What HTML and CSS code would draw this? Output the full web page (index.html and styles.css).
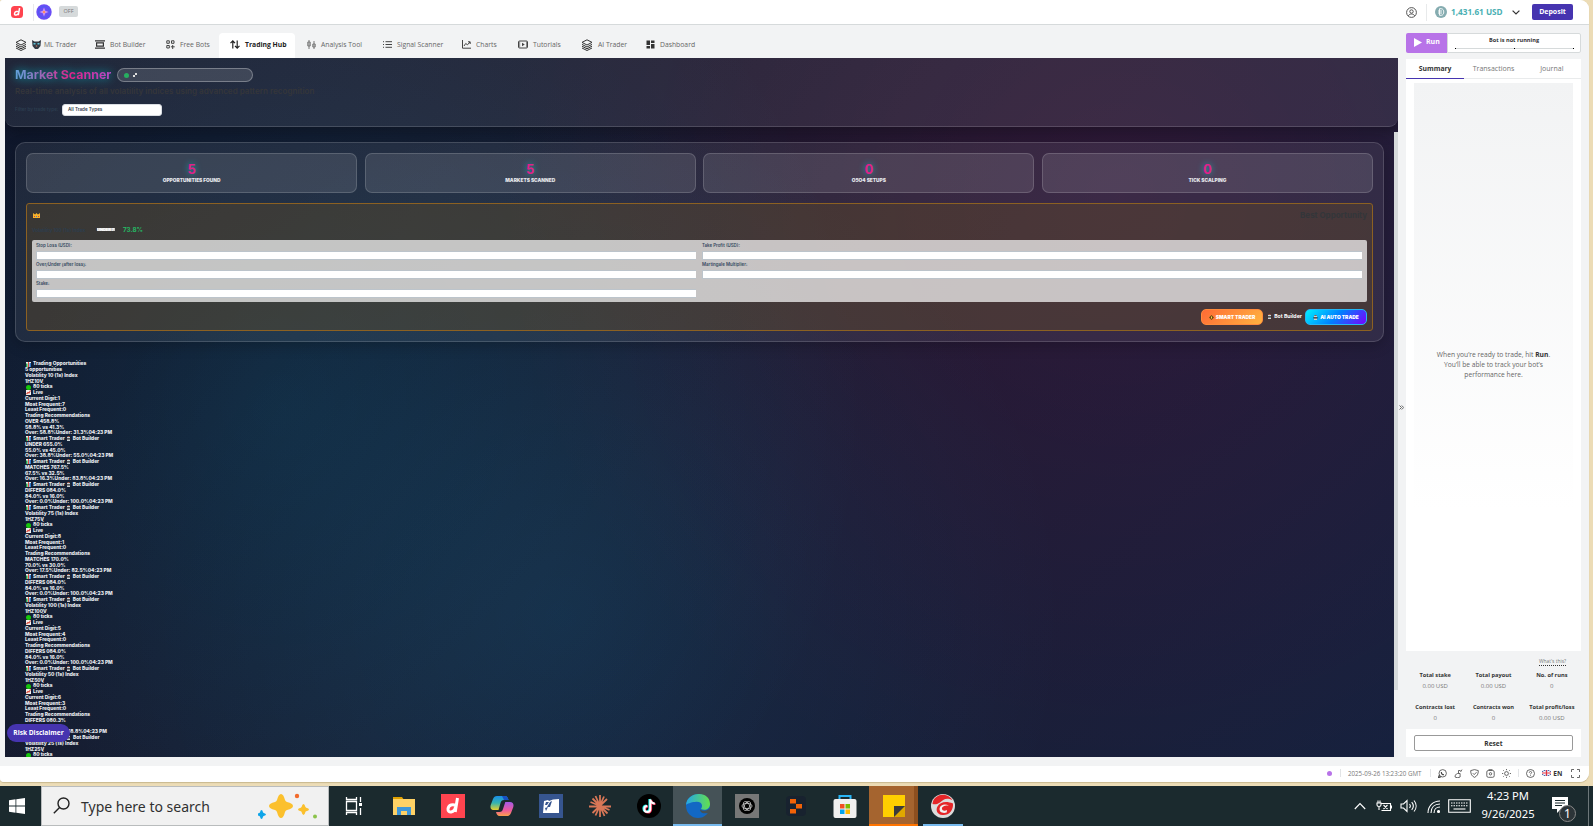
FILE: index.html
```html
<!DOCTYPE html>
<html lang="en">
<head>
<meta charset="utf-8">
<title>Trading Hub</title>
<link rel="stylesheet" href="styles.css">
</head>
<body>
<svg class="defs" width="0" height="0">
  <symbol id="bars" viewBox="0 0 10 10"><path fill="#e9eef0" d="M0 0h10v10H0z"/><path fill="#22a34c" d="M0 3h3v7H0z"/><path fill="#d84a3c" d="M4 0h2v10H4z"/><path fill="#2f78c8" d="M7 2h3v8H7z"/></symbol>
  <symbol id="line" viewBox="0 0 10 10"><path fill="#f1f1ee" d="M0 0h10v10H0z"/><path fill="none" stroke="#d9493b" stroke-width="2.2" d="M1 8l3-3 2 1 3-5"/></symbol>
  <symbol id="dot" viewBox="0 0 10 10"><circle cx="5" cy="5" r="5" fill="#16c60c"/></symbol>
  <symbol id="bot" viewBox="0 0 10 10"><path fill="#c9d3d8" d="M2 2h6v8H2z"/><path fill="#3b2a2a" d="M1 4h8v3H1z"/><path fill="#a8553e" d="M3 0h4v2H3z"/><path fill="#7fd6e6" d="M3 5h1.500v1H3zM5.500 5H7v1H5.500z"/></symbol>
  <symbol id="layers" viewBox="0 0 12 12"><path fill="none" stroke="#333" d="M6 .8l5 2.600-5 2.600-5-2.600zM1 5.400L6 8l5-2.600M1 7.200l5 2.600 5-2.600M1 9l5 2.500L11 9"/></symbol>
  <symbol id="spark" viewBox="0 0 24 24"><path d="M12 0q2.500 0 4 6 .5 1.500 2 2 6 1.500 6 4t-6 4q-1.500.5-2 2-1.500 6-4 6t-4-6q-.5-1.500-2-2-6-1.500-6-4t6-4q1.500-.5 2-2 1.500-6 4-6z"/></symbol>
</svg>

<div class="window">
  <header class="top">
    <svg class="logo" viewBox="0 0 12 12"><rect width="12" height="12" rx="3.500" fill="#ff444f"/><path fill="none" stroke="#fff" stroke-width="1.500" d="M8.600 2L7.300 9.200M7.600 7.300c-.6 2-4.300 2.500-4.100.4.200-2.300 3-2.700 4.500-1.900"/></svg>
    <i class="vline"></i>
    <svg class="round" viewBox="0 0 16 16"><circle cx="8" cy="8" r="7.700" fill="#6a4df5"/><circle cx="8" cy="8" r="5.500" fill="none" stroke="#3f63f0" stroke-width=".7"/><path fill="#c79af5" d="M8 3.500L9.300 6.700 12.500 8 9.300 9.300 8 12.500 6.700 9.300 3.500 8l3.200-1.300z"/><circle cx="8" cy="8" r="1.300" fill="#ff8a65"/></svg>
    <span class="off">OFF</span>
    <span class="grow"></span>
    <svg class="user" viewBox="0 0 11 11" fill="none" stroke="#444" stroke-width=".9"><circle cx="5.500" cy="5.500" r="4.900"/><circle cx="5.500" cy="4.500" r="1.700"/><path d="M2.400 8.800c1-2.400 5.200-2.400 6.200 0"/></svg>
    <i class="vline"></i>
    <svg class="coin" viewBox="0 0 12 12"><circle cx="6" cy="6" r="6" fill="#85acb0"/><path fill="none" stroke="#fff" stroke-width=".9" d="M4.500 2.700h1.700c3.400 0 3.400 6.600 0 6.600H4.500zM3 5h4M3 7h4"/></svg>
    <b class="bal">1,431.61 USD</b>
    <svg class="chev" viewBox="0 0 8 5"><path fill="none" stroke="#333" stroke-width="1.200" d="M.6.6L4 4 7.400.6"/></svg>
    <button class="deposit">Deposit</button>
  </header>

  <div class="body">
    <main>
      <nav class="tabs">
        <a class="t1"><svg class="i12"><use href="#layers"/></svg><svg class="cat" viewBox="0 0 9 9"><path fill="#333a44" d="M0 0l2.500 1.500h4L9 0 8.500 6 6 9H3L.5 6z"/><path fill="#5fc4d8" d="M1.500 3h2v1.500h-2zM5.500 3h2v1.500h-2z"/><path fill="#e08a6a" d="M3.800 5.500h1.400v1H3.800z"/></svg><span>ML Trader</span></a>
        <a class="t2"><svg class="i10" viewBox="0 0 10 9"><path fill="none" stroke="#333" stroke-width="1.200" d="M0 .8h10M0 8.200h10M1.600 2.800h6.800v3.400H1.600z"/></svg><span>Bot Builder</span></a>
        <a class="t3"><svg class="i9" viewBox="0 0 9 9"><path fill="none" stroke="#444" d="M.8.8h2.500v2.500H.8zM5.500.8H8v2.500H5.500zM.8 5.500h2.500V8H.8zM6.700 5v4M4.900 6.800h3.800"/></svg><span>Free Bots</span></a>
        <a class="t4 on"><svg class="i10" viewBox="0 0 10 9"><path fill="none" stroke="#222" stroke-width="1.200" d="M2.800 8.500V1M.5 3.200L2.800.9 5 3.200M7.200.5V8M5 5.800l2.200 2.300 2.300-2.300"/></svg><span>Trading Hub</span></a>
        <a class="t5"><svg class="i9" viewBox="0 0 9 9"><path fill="none" stroke="#777" d="M2 0v9M7 1v8M.8 2h2.400v4H.8zM5.800 4h2.400v3H5.800z"/></svg><span>Analysis Tool</span></a>
        <a class="t6"><svg class="i9" viewBox="0 0 9 8"><path stroke="#444" d="M0 1.200h1M0 4h1M0 6.800h1M2.500 1.200H9M2.500 4H9M2.500 6.800H9"/></svg><span>Signal Scanner</span></a>
        <a class="t7"><svg class="i9" viewBox="0 0 9 9"><path fill="none" stroke="#444" d="M.5 0v8.200H9M2 6l1.700-2.500 1.800 1.300L8 2M6 1.800h2.200V4"/></svg><span>Charts</span></a>
        <a class="t8"><svg class="i10" viewBox="0 0 10 8"><rect x=".5" y=".5" width="9" height="7" rx="1" fill="none" stroke="#444"/><path fill="#444" d="M4 2.200L6.800 4 4 5.800zM1.500 1v6h.6V1zM8 1v6h.6V1z"/></svg><span>Tutorials</span></a>
        <a class="t9"><svg class="i12"><use href="#layers"/></svg><span>AI Trader</span></a>
        <a class="t10"><svg class="i9" viewBox="0 0 9 9"><path fill="#333" d="M.5.5H4V5H.5zM5 .5h3.500v2.600H5zM.5 6H4v2.500H.5zM5 4h3.500v4.500H5z"/></svg><span>Dashboard</span></a>
      </nav>

      <div class="hub">
        <section class="head">
          <div class="hrow"><h1><span>Market Scanner</span></h1><div class="pill"><i class="green"></i><svg class="plug" viewBox="0 0 4 4"><path fill="#ddd" d="M0 2h2V0h2v2H2v2H0z"/></svg></div></div>
          <p class="sub">Real-time analysis of all volatility indices using advanced pattern recognition</p>
          <div class="filter"><label>Filter by trade type:</label><div class="select">All Trade Types</div></div>
        </section>

        <div class="scroll">
          <section class="card">
            <div class="stats">
              <div><b>5</b><small>OPPORTUNITIES FOUND</small></div>
              <div><b>5</b><small>MARKETS SCANNED</small></div>
              <div><b>0</b><small>O5O4 SETUPS</small></div>
              <div><b>0</b><small>TICK SCALPING</small></div>
            </div>
            <div class="best">
              <div class="bh"><svg class="crown" viewBox="0 0 7 5"><path fill="#f7b32b" d="M0 0l2 1.500L3.500 0 5 1.500 7 0v5H0z"/><path fill="#d0452f" d="M1 3h1v1H1zM5 3h1v1H5z"/><path fill="#2f8bd0" d="M3 3h1v1H3z"/></svg><h2>Best Opportunity</h2></div>
              <div class="bi"><span class="mk">Volatility 100 (1s) Index</span><span class="un">UNDER 7</span><span class="pc">73.8%</span></div>
              <div class="form">
                <label>Stop Loss (USD):<i></i></label><label>Take Profit (USD):<i></i></label>
                <label>Over/Under (after loss):<i></i></label><label>Martingale Multiplier:<i></i></label>
                <label>Stake:<i></i></label>
              </div>
              <div class="acts"><span class="smart"><svg class="i5" viewBox="0 0 10 10"><path fill="#6b4a12" d="M5 0l5 5-5 5-5-5z"/><path fill="#ffd34d" d="M4 3h2v4H4z"/></svg>SMART TRADER</span><span class="bb"><svg class="i5"><use href="#bot"/></svg>Bot Builder</span><span class="ai"><svg class="i5"><use href="#bot"/></svg>AI AUTO TRADE</span></div>
            </div>
          </section>

          <section class="list">
            <p><svg><use href="#bars"/></svg>Trading Opportunities</p><p>5 opportunities</p>
            <p>Volatility 10 (1s) Index</p><p>1HZ10V</p><p><svg><use href="#dot"/></svg>80 ticks</p><p><svg><use href="#line"/></svg>Live</p><p>Current Digit:1</p><p>Most Frequent:7</p><p>Least Frequent:0</p><p>Trading Recommendations</p>
            <p>OVER 458.8%</p><p>58.8% vs 41.3%</p><p>Over: 58.8%Under: 31.3%04:23 PM</p><p><svg><use href="#bars"/></svg>Smart Trader<svg class="b"><use href="#bot"/></svg>Bot Builder</p>
            <p>UNDER 655.0%</p><p>55.0% vs 45.0%</p><p>Over: 38.8%Under: 55.0%04:23 PM</p><p><svg><use href="#bars"/></svg>Smart Trader<svg class="b"><use href="#bot"/></svg>Bot Builder</p>
            <p>MATCHES 767.5%</p><p>67.5% vs 32.5%</p><p>Over: 16.3%Under: 83.8%04:23 PM</p><p><svg><use href="#bars"/></svg>Smart Trader<svg class="b"><use href="#bot"/></svg>Bot Builder</p>
            <p>DIFFERS 084.0%</p><p>84.0% vs 16.0%</p><p>Over: 0.0%Under: 100.0%04:23 PM</p><p><svg><use href="#bars"/></svg>Smart Trader<svg class="b"><use href="#bot"/></svg>Bot Builder</p>
            <p>Volatility 75 (1s) Index</p><p>1HZ75V</p><p><svg><use href="#dot"/></svg>80 ticks</p><p><svg><use href="#line"/></svg>Live</p><p>Current Digit:8</p><p>Most Frequent:1</p><p>Least Frequent:0</p><p>Trading Recommendations</p>
            <p>MATCHES 170.0%</p><p>70.0% vs 30.0%</p><p>Over: 17.5%Under: 82.5%04:23 PM</p><p><svg><use href="#bars"/></svg>Smart Trader<svg class="b"><use href="#bot"/></svg>Bot Builder</p>
            <p>DIFFERS 084.0%</p><p>84.0% vs 16.0%</p><p>Over: 0.0%Under: 100.0%04:23 PM</p><p><svg><use href="#bars"/></svg>Smart Trader<svg class="b"><use href="#bot"/></svg>Bot Builder</p>
            <p>Volatility 100 (1s) Index</p><p>1HZ100V</p><p><svg><use href="#dot"/></svg>80 ticks</p><p><svg><use href="#line"/></svg>Live</p><p>Current Digit:5</p><p>Most Frequent:4</p><p>Least Frequent:0</p><p>Trading Recommendations</p>
            <p>DIFFERS 084.0%</p><p>84.0% vs 16.0%</p><p>Over: 0.0%Under: 100.0%04:23 PM</p><p><svg><use href="#bars"/></svg>Smart Trader<svg class="b"><use href="#bot"/></svg>Bot Builder</p>
            <p>Volatility 50 (1s) Index</p><p>1HZ50V</p><p><svg><use href="#dot"/></svg>80 ticks</p><p><svg><use href="#line"/></svg>Live</p><p>Current Digit:6</p><p>Most Frequent:3</p><p>Least Frequent:0</p><p>Trading Recommendations</p>
            <p>DIFFERS 080.3%</p><p></p><p class="tail">18.8%04:23 PM</p><p class="tail2"><svg class="b"><use href="#bot"/></svg>Bot Builder</p>
            <p>Volatility 25 (1s) Index</p><p>1HZ25V</p><p><svg><use href="#dot"/></svg>80 ticks</p>
          </section>
          <div class="bar"><i></i></div>
        </div>
        <div class="risk">Risk Disclaimer</div>
      </div>
    </main>

    <div class="handle"><svg viewBox="0 0 5 5"><path fill="none" stroke="#444" stroke-width=".8" d="M.5.500l2 2-2 2M2.700.500l2 2-2 2"/></svg></div>

    <aside>
      <div class="runrow">
        <div class="run"><svg viewBox="0 0 8 9"><path fill="#fff" d="M0 0l8 4.500L0 9z"/></svg>Run</div>
        <div class="state"><b>Bot is not running</b><div class="track"><i></i><i></i><i></i></div></div>
      </div>
      <div class="panel">
        <div class="ptabs"><span class="on">Summary</span><span>Transactions</span><span>Journal</span></div>
        <div class="empty"><div><p>When you’re ready to trade, hit <b>Run</b>.<br>You’ll be able to track your bot’s<br>performance here.</p></div></div>
        <div class="totals">
          <div class="what"><span>What's this?</span></div>
          <div class="tg"><div><b>Total stake</b><span>0.00 USD</span></div><div><b>Total payout</b><span>0.00 USD</span></div><div><b>No. of runs</b><span>0</span></div>
          <div><b>Contracts lost</b><span>0</span></div><div><b>Contracts won</b><span>0</span></div><div><b>Total profit/loss</b><span>0.00 USD</span></div></div>
        </div>
        <div class="reset"><button>Reset</button></div>
      </div>
    </aside>
  </div>

  <footer>
    <i class="pd"></i><i class="vl"></i><span class="time">2025-09-26 13:23:20 GMT</span><i class="vl"></i>
    <svg viewBox="0 0 9 9"><circle cx="4.700" cy="4.300" r="3.700"/><path d="M1.400 6L.5 8.600l2.700-.8M3.300 3c0 1.500 1.200 2.800 2.700 2.800" stroke-width="1.100"/></svg>
    <svg viewBox="0 0 9 9"><path d="M3.500 4.500h2.600V8c-1 .8-4.600.8-5 0-.3-1.500.7-3 2.400-3.500zM4.500 4V1.500h2M6.500 3L8 .6"/></svg>
    <svg viewBox="0 0 9 9"><path d="M4.500.6l3.800 1c0 3.500-1 5.400-3.800 6.800C1.700 7 .7 5.100.7 1.600zM2.800 4.200l1.400 1.400 2.300-2.400"/></svg>
    <svg viewBox="0 0 9 9"><rect x=".8" y="1.500" width="7.400" height="6.800" rx="1.500"/><path d="M2.500.7h4"/><circle cx="4.500" cy="4.800" r="1.200"/></svg>
    <svg viewBox="0 0 9 9"><circle cx="4.500" cy="4.500" r="1.900"/><path d="M4.500 0v1.200M4.500 7.800V9M0 4.500h1.200M7.800 4.500H9M1.300 1.300l.8.8M6.900 6.900l.8.800M1.300 7.700l.8-.8M6.900 2.100l.8-.8"/></svg>
    <i class="vl"></i>
    <svg viewBox="0 0 9 9"><circle cx="4.500" cy="4.500" r="4"/><path d="M3.300 3.700c0-1.800 2.500-1.500 2.300-.1-.1.800-1.100.8-1.100 1.800M4.500 6.300v.8"/></svg>
    <svg class="flag" viewBox="0 0 9 6"><path fill="#3a56a5" stroke="none" d="M0 0h9v6H0z"/><path stroke="#fff" stroke-width="1.200" d="M0 0l9 6M9 0L0 6"/><path stroke="#fff" stroke-width="2.200" d="M4.500 0v6M0 3h9"/><path stroke="#e03040" stroke-width="1.100" d="M4.500 0v6M0 3h9"/></svg><b>EN</b>
    <svg class="fs" viewBox="0 0 9 9"><path d="M.5 3V.5H3M6 .5h2.500V3M8.500 6v2.500H6M3 8.500H.5V6"/></svg>
  </footer>
</div>

<div class="taskbar">
  <div class="start"><svg viewBox="0 0 16 16"><path fill="#fff" d="M0 2.200L6.500 1.300v6.200H0zM7.300 1.200L16 0v7.500H7.300zM0 8.400h6.500v6.300L0 13.800zM7.300 8.400H16V16l-8.700-1.200z"/></svg></div>
  <div class="search"><svg class="mag" viewBox="0 0 17 17"><circle cx="10.500" cy="6.500" r="5.500" fill="none" stroke="#222" stroke-width="1.400"/><path stroke="#222" stroke-width="1.400" d="M6.600 10.400L.8 16.300"/></svg><span>Type here to search</span>
    <svg class="stars" viewBox="0 0 60 26"><use href="#spark" x="11" y="1" width="24" height="24" fill="#fbc02d"/><use href="#spark" x="40" y="11" width="11" height="11" fill="#fbc02d"/><use href="#spark" x="-1" y="17" width="9" height="9" fill="#0ea5e9"/><circle cx="39" cy="3" r="2.200" fill="#f26b2c"/><circle cx="57" cy="23.500" r="2" fill="#8bc34a"/></svg></div>
  <div class="apps">
    <div><svg viewBox="0 0 24 24"><path fill="none" stroke="#fff" stroke-width="1.300" d="M3.500 7.500h10v9h-10zM3.500 3v2.500h10V3M3.500 21v-2.500h10V21M17.500 3v5M17.500 14v7"/><path fill="#fff" d="M16 9h3v3h-3z"/></svg></div>
    <div><svg viewBox="0 0 24 24"><path fill="#e0a100" d="M1 3h9l2 3H1z"/><path fill="#fed165" d="M1 5h22v16H1z"/><path fill="#3f97d8" d="M5 13h14v8h-4v-4H9v4H5z"/></svg></div>
    <div><svg viewBox="0 0 24 24"><path fill="#ff444f" d="M0 0h24v24H0z"/><path fill="none" stroke="#fff" stroke-width="3" d="M16.500 4L14.200 18M14.500 13c-1 6-8 6.500-7.500 2 .4-4.500 5-5 8-3.500"/></svg></div>
    <div><svg viewBox="0 0 24 24"><defs><linearGradient id="ca" x2="0" y2="1"><stop offset="0" stop-color="#1a8fe8"/><stop offset=".5" stop-color="#35b4b0"/><stop offset="1" stop-color="#e8d02c"/></linearGradient><linearGradient id="cb" x2="0" y2="1"><stop offset="0" stop-color="#a35ae8"/><stop offset=".6" stop-color="#ee5a9a"/><stop offset="1" stop-color="#f9a04a"/></linearGradient></defs><path fill="url(#ca)" d="M7 2h8c2 0 3 2 3.500 4H14c-2 0-3 1-3.500 3L8.500 16H4c-3 0-4-2-3.300-5L3 5c.8-2 2-3 4-3z"/><path fill="url(#cb)" d="M17 22H9.500C7.500 22 6.500 20 6 18h3.500c2 0 3-1 3.500-3l2.300-7H20c3 0 4 2 3.300 5L21 19c-.8 2-2 3-4 3z"/><path fill="#1750c4" d="M12 2h3c2 0 3 2 3.500 4H14z"/></svg></div>
    <div><svg viewBox="0 0 24 24"><path fill="#36558f" d="M0 0h24v24H0z"/><path fill="#fff" d="M5 7l4-1 1 1 4-1.500 6-.5v14H4z"/><path fill="#36558f" d="M7 8h3l-2 3H6zM11 8l2-1-2 6H8zM6 14l3-1-2 4z"/></svg></div>
    <div><svg viewBox="0 0 24 24"><path stroke="#d97757" stroke-width="1.800" d="M12 1v22M1 12.500h22M4.500 4.500l15 15M19 5L4.500 19M7.500 2l9 20M16 2.500L7.500 21.500M2.500 8l19 8"/></svg></div>
    <div><svg viewBox="0 0 24 24"><circle cx="12" cy="12" r="12"/><path fill="none" stroke="#25f4ee" stroke-width="2.200" d="M12.500 5v9.500a3 3 0 1 1-3-3M12.500 5c.5 2.500 2 4 4.500 4"/><path fill="none" stroke="#fe2c55" stroke-width="2.200" d="M14 6v9.500a3 3 0 1 1-3-3M14 6c.5 2.500 2 4 4.500 4"/><path fill="none" stroke="#fff" stroke-width="2" d="M13.300 5.500V15a3 3 0 1 1-3-3M13.300 5.500c.5 2.500 2 4 4.500 4"/></svg></div>
    <div class="edge"><svg viewBox="0 0 24 24"><defs><linearGradient id="eg"><stop offset="0" stop-color="#25a6e8"/><stop offset="1" stop-color="#63e04c"/></linearGradient></defs><circle cx="12" cy="12" r="12" fill="#1268c4"/><path fill="url(#eg)" d="M0 11C1-3 24-4 24 10c0 5-5 7-9 5 3-5-1-8-6-7-4 0-8 2-9 3z"/><path fill="#455257" d="M14 15.500c3 2 7 1.500 9.500-1l.5 3-2 1.500c-4 1-8 0-8-3.500z"/></svg></div>
    <div><svg viewBox="0 0 24 24"><path fill="#777" d="M0 0h24v24H0z"/><circle cx="12" cy="12" r="8"/><g fill="none" stroke="#ddd" stroke-width=".7"><ellipse cx="12" cy="12" rx="5" ry="2.600"/><ellipse cx="12" cy="12" rx="5" ry="2.600" transform="rotate(60 12 12)"/><ellipse cx="12" cy="12" rx="5" ry="2.600" transform="rotate(120 12 12)"/></g></svg></div>
    <div><svg viewBox="0 0 24 24"><rect x="2" y="2" width="20" height="20" rx="4" fill="#18222f"/><path fill="#f26207" d="M6 5h6v4.500H6zM12 10h6v4.500h-6zM6 15h6v4.500H6z"/></svg></div>
    <div><svg viewBox="0 0 24 24"><path fill="none" stroke="#29b6f6" stroke-width="2" d="M6.500 7V2h11v5"/><rect x=".5" y="5" width="23" height="19" rx="2" fill="#f0f0f0"/><path fill="#f25022" d="M7 10h4.500v4.500H7z"/><path fill="#7fba00" d="M12.500 10H17v4.500h-4.500z"/><path fill="#00a4ef" d="M7 15.500h4.500V20H7z"/><path fill="#ffb900" d="M12.500 15.500H17V20h-4.500z"/></svg></div>
    <div class="sticky"><svg viewBox="0 0 24 24"><path fill="#ffcf00" d="M1 1h22v22H1z"/><path fill="#e0a800" d="M12 12h11v11H12z"/><path fill="#3b3b3b" d="M12 12h11L12 23z"/></svg></div>
    <div class="cc"><svg viewBox="0 0 24 24"><circle cx="12" cy="12" r="12" fill="#dcdcdc"/><path fill="#e52528" d="M1.500 10C2 3 9-.5 15 1.200c3 1 5 2.500 6.500 5C15 3 12 6 9 8.500 6 10.500 3.500 10.500 1.500 10z"/><path fill="#e52528" d="M22 9.500c.5 7-4 12-10.500 11.500C6 20.500 4.500 16 6.500 12.500 9 8 15 6.500 22 9.500z"/><path fill="#f2f2f2" d="M18 11.500c-4-.5-7.500 1-7 3.500.4 2 3 2 5 1l-.3 2.500c-4 1.300-8-.5-7-4.500.8-3.200 5-4.500 9.300-2.500z"/></svg></div>
  </div>
  <span class="grow"></span>
  <div class="tray">
    <svg class="y1" viewBox="0 0 12 8"><path d="M.8 7L6 1.500 11.200 7"/></svg>
    <svg class="y2" viewBox="0 0 16 12"><path d="M5.500 3.500h9v7h-9M15.500 5.500v3M7.500 5l4 4M11.500 5l-4 4M1 3h4v2c0 2-4 2-4 0zM2 3V.5M4 3V.5M3 6.500V10"/></svg>
    <svg class="y3" viewBox="0 0 17 14"><path d="M1 5h2.500L7 1.500v11L3.500 9H1zM9.500 5c1 1.200 1 2.800 0 4M11.700 3.200c2 2.300 2 5.300 0 7.600M14 1.500c2.800 3.300 2.800 7.700 0 11"/></svg>
    <svg class="y4" viewBox="0 0 13 13"><path d="M1 13C1 6 6 1 13 1M4 13c0-5.500 3.500-9 9-9M7 13c0-3.500 2.500-6 6-6"/><circle cx="11.500" cy="11.500" r="1" fill="#fff"/></svg>
    <svg class="y5" viewBox="0 0 23 14"><path d="M.7.700h21.600v12.600H.7z"/><path stroke-dasharray="1.500 1" d="M3 4h17M3 6.800h17"/><path d="M5.500 10h12"/></svg>
    <div class="clock">4:23 PM<br>9/26/2025</div>
    <div class="note"><svg viewBox="0 0 16 16"><path fill="#fff" stroke="none" d="M0 0h16v12h-7l-4 4v-4H0z"/><path stroke="#1b2a2e" d="M3 3.500h10M3 6h10M3 8.500h7"/></svg><span>1</span></div>
  </div>
</div>
</body>
</html>
```
FILE: styles.css
```css
* { box-sizing: border-box; margin: 0; padding: 0; }
body { width: 1593px; height: 826px; overflow: hidden; background: #ecdcb6; font-family: "Open Sans", "Noto Sans", sans-serif; color: #333; }
svg { display: block; flex: none; }
i { display: block; flex: none; }
.defs { position: absolute; }
.grow { flex: 1; }

.window { width: 1589px; height: 782px; margin-bottom: 4px; background: #f2f3f4; border-radius: 3px 9px 9px 4px; overflow: hidden; display: flex; flex-direction: column; box-shadow: 0 1px 1px #c9b98f; }
.top { height: 25px; background: #fff; border-bottom: 1px solid #d6dadb; display: flex; align-items: center; padding: 0 16px 0 11px; }
.logo { width: 12px; height: 12px; margin-right: 10px; }
.vline { width: 1px; height: 17px; background: #e8eaeb; }
.round { width: 16px; height: 16px; margin: 0 7px 0 2px; }
.off { width: 19px; height: 11px; margin-top: -1px; background: #d6dadb; border-radius: 2px; color: #777; font-size: 5.5px; line-height: 11px; text-align: center; }
.user { width: 11px; height: 11px; margin-right: 9px; }
.coin { width: 12px; height: 12px; margin: 0 4px 0 8px; }
.bal { width: 52px; font-size: 8.200px; color: #4ab0b3; line-height: 12px; white-space: nowrap; }
.chev { width: 8px; height: 5px; margin: 0 12px 0 9px; }
.deposit { width: 41px; height: 16px; border: 0; border-radius: 2px; background: #4634b0; color: #fff; font: 700 7px/16px "Open Sans", sans-serif; }

.body { flex: none; height: 732px; display: flex; }
main { width: 1393px; margin-left: 5px; }
.tabs { height: 33px; padding-top: 8px; display: flex; }
.tabs a { height: 25px; display: flex; align-items: center; padding: 0 0 2px 10px; gap: 5px; font-size: 6.800px; color: #666; white-space: nowrap; flex: none; }
.tabs .on { background: #fff; border-radius: 4px 4px 0 0; color: #222; font-weight: 700; padding-left: 11px; }
.i12 { width: 12px; height: 12px; } .i10 { width: 10px; height: 9px; } .i9 { width: 9px; height: 9px; } .i5 { width: 5px; height: 5px; }
.cat { width: 9px; height: 9px; margin-right: -2px; }
.t1 { width: 80px; } .t2 { width: 71px; } .t3 { width: 63px; } .t4 { width: 76px; } .t5 { width: 78px; padding-left: 12px !important; } .t6 { width: 79px; } .t7 { width: 56px; } .t8 { width: 63px; } .t9 { width: 65px; } .t10 { width: 70px; }

.hub { position: relative; height: 699px; display: flex; flex-direction: column; overflow: hidden; font-family: Inter, sans-serif;
  background: radial-gradient(circle at 20% 50%, rgba(0,212,255,.11), transparent 50%), radial-gradient(circle at 80% 20%, rgba(255,0,128,.09), transparent 50%), radial-gradient(circle at 40% 80%, rgba(0,180,255,.1), transparent 50%), linear-gradient(135deg, #0f0f23 0%, #1a1a2e 50%, #16213e 100%); }
.head { flex: none; height: 69px; padding: 10px 10px 0; background: rgba(255,255,255,.08); border-bottom: 1px solid rgba(255,255,255,.15); border-radius: 0 0 9px 9px; box-shadow: 0 4px 14px rgba(0,0,0,.3); }
.hrow { display: flex; gap: 6px; height: 14px; align-items: center; }
h1 { width: 96px; font-size: 12.400px; line-height: 14px; font-weight: 700; white-space: nowrap; filter: drop-shadow(0 0 5px rgba(0,212,230,.75)); }
h1 span { background: linear-gradient(90deg, #5fa3dc, #e0218a 60%, #b04cc8); -webkit-background-clip: text; background-clip: text; color: transparent; }
.pill { width: 136px; height: 14px; border: 1px solid rgba(255,255,255,.3); border-radius: 7px; background: rgba(255,255,255,.13); display: flex; align-items: center; gap: 4px; padding-left: 6px; }
.green { width: 5px; height: 5px; border-radius: 50%; background: #27ae60; }
.plug { width: 4px; height: 4px; }
.sub { font-size: 8.100px; line-height: 10px; margin-top: 4px; font-weight: 600; color: #35363a; white-space: nowrap; }
.filter { margin-top: 7px; display: flex; align-items: center; height: 13px; font-size: 4.6px; font-weight: 600; }
.filter label { width: 47px; color: #2c3e50; white-space: nowrap; }
.select { width: 100px; height: 12px; border-radius: 3px; background: #fff; border: 1px solid #d9dde2; line-height: 10px; padding-left: 5px; color: #33404d; }

.scroll { position: relative; flex: 1; min-height: 0; padding: 15px 14px 0 10px; }
.card { height: 200px; padding: 10px; border: 1px solid rgba(255,255,255,.15); border-radius: 10px; background: rgba(255,255,255,.07); box-shadow: 0 4px 14px rgba(0,0,0,.2); }
.stats { display: grid; grid-template-columns: repeat(4, 1fr); gap: 7.500px; height: 40px; }
.stats div { border: 1px solid rgba(255,255,255,.16); border-radius: 7px; background: rgba(255,255,255,.11); text-align: center; padding-top: 8px; }
.stats b { display: block; font-size: 13px; line-height: 14px; color: #e0218a; text-shadow: 0 0 6px rgba(0,212,230,.7); }
.stats small { display: block; margin-top: 1px; font-size: 4.800px; line-height: 7px; font-weight: 900; color: #e3e5ea; }
.best { margin-top: 10px; height: 128px; border: 1px solid #8c6122; border-radius: 3px; background: rgba(100,76,36,.38); padding: 5px; }
.bh { display: flex; height: 13px; justify-content: space-between; align-items: center; }
.crown { width: 7px; height: 5px; margin-left: 1px; }
h2 { font-size: 8px; line-height: 13px; font-weight: 700; color: #33363a; }
.bi { display: flex; align-items: center; height: 15px; font-size: 4.800px; white-space: nowrap; }
.mk { width: 65px; color: #2c3e50; font-weight: 600; }
.un { width: 18px; height: 3px; line-height: 3px; background: #c8c8c8; color: #fff; font-size: 4px; font-weight: 800; margin-right: 8px; }
.pc { color: #27ae60; font-weight: 800; font-size: 6.200px; }
.form { margin-top: 3px; height: 62px; border-radius: 2px; background: rgba(255,255,255,.7); padding: 2px 4px 0; display: grid; grid-template-columns: 661px 661px; grid-auto-rows: 19px; column-gap: 5px; }
.form label { font-size: 4.400px; line-height: 8px; font-weight: 600; color: #34495e; }
.form i { height: 9px; margin: 1px 1px 0 0; background: #fff; border: 1px solid #bcc4cb; border-width: 1px 0 1px 1px; }
.acts { margin-top: 7px; display: flex; justify-content: flex-end; gap: 4px; font-size: 4.900px; font-weight: 900; color: #fff; }
.acts span { display: flex; align-items: center; justify-content: center; gap: 2px; height: 16px; white-space: nowrap; }
.smart { width: 62px; border-radius: 5px; background: linear-gradient(135deg, #ff6b35, #ffb340); border: 1px solid #ff8a3c; }
.acts .bb { width: 35px; height: 14px; font-size: 5.200px; margin-right: -1px; font-weight: 700; }
.ai { width: 62px; border-radius: 5px; background: linear-gradient(135deg, #00f0ff, #0080ff 50%, #7a00ff); border: 1px solid #25b6f5; }

.list { padding: 19.250px 0 0 10px; font-size: 4.900px; font-weight: 800; color: #e8ebef; white-space: nowrap; }
.list p { display: flex; align-items: center; height: 5.750px; line-height: 5.750px; }
.list svg { width: 5px; height: 5px; margin: 0 2px 0 1px; }
.list .tail { padding-left: 43px; }
.list .tail2 { padding-left: 40px; }
.bar { position: absolute; top: 5px; right: 0; bottom: 0; width: 4px; background: #f0f1f2; }
.bar i { height: 558px; background: #d6dadb; }
.risk { position: absolute; left: 2px; top: 666px; width: 63px; height: 18px; border-radius: 9px; background: #4634b0; color: #fff; font: 700 6.600px/18px "Open Sans", sans-serif; text-align: center; white-space: nowrap; }
.head + .scroll { margin-top: 0; }

.handle { width: 8px; display: flex; align-items: center; justify-content: center; padding: 32px 1px 0 0; }
.handle svg { width: 5px; height: 5px; }
aside { width: 175px; padding-top: 8px; }
.runrow { display: flex; height: 20px; }
.run { width: 41px; background: #b873e8; border-radius: 2px 0 0 2px; color: #fff; font-size: 7px; font-weight: 700; display: flex; align-items: center; gap: 4px; padding: 0 0 3px 8px; }
.run svg { width: 8px; height: 9px; margin-top: 2px; }
.state { flex: 1; background: #fff; border: 1px solid #d6dadb; border-radius: 0 2px 2px 0; text-align: center; }
.state b { display: block; font-size: 5.600px; line-height: 8px; padding-top: 2px; }
.track { margin: 3px 6px 0 7px; height: 3px; display: flex; justify-content: space-between; align-items: center; background: linear-gradient(#d6dadb, #d6dadb) center / 100% 1px no-repeat; }
.track i { width: 1px; height: 1px; background: #000; }
.panel { margin-top: 6px; height: 698px; background: #fff; display: flex; flex-direction: column; }
.ptabs { height: 20px; display: flex; border-bottom: 1px solid #e9ebec; }
.ptabs span { flex: 1; text-align: center; font-size: 7px; line-height: 19px; color: #777; }
.ptabs .on { font-weight: 700; color: #333; border-bottom: 1px solid #4634b0; height: 20px; font-size: 6.800px; }
.empty { height: 572px; padding: 4px 8px 0; }
.empty div { height: 100%; background: linear-gradient(#f2f3f4, #fff 75%); display: flex; align-items: center; justify-content: center; text-align: center; padding-bottom: 4px; }
.empty p { font-size: 6.700px; line-height: 10px; color: #666; white-space: nowrap; }
.empty b { color: #333; }
.totals { height: 78px; background: #f2f3f4; padding-top: 6px; }
.what { display: flex; justify-content: flex-end; padding-right: 15px; height: 11px; }
.what span { width: 27px; height: 9px; font-size: 4.900px; line-height: 8px; color: #777; border-bottom: 1px dotted #333; white-space: nowrap; text-align: center; }
.tg { display: grid; grid-template-columns: repeat(3, 1fr); grid-auto-rows: 32px; text-align: center; white-space: nowrap; }
.tg b, .tg span { display: block; font-size: 6px; line-height: 11px; }
.tg b { font-size: 5.700px; }
.tg div { padding-top: 2px; }
.tg span { color: #777; }
.reset { padding: 6px 8px 0; }
.reset button { display: block; width: 100%; height: 16px; background: #fff; border: 1px solid #999; border-radius: 2px; font: 700 6.600px/13px "Open Sans", sans-serif; color: #333; }

footer { margin-top: 9px; height: 16px; background: #fff; display: flex; align-items: center; padding: 0 9px 2px 1327px; font-size: 6.200px; color: #777; white-space: nowrap; }
footer svg { width: 9px; height: 9px; fill: none; stroke: #444; stroke-width: .800; margin-right: 7px; }
.pd { width: 5px; height: 5px; border-radius: 50%; background: #b873e8; margin-right: 8px; }
.vl { width: 1px; height: 8px; background: #e2e4e6; margin-right: 7px; }
.time { width: 77px; margin-right: 7px; }
footer .flag { width: 9px; height: 6px; margin-right: 2px; stroke: none; }
footer b { color: #333; width: 11px; margin-right: 7px; font-size: 6.600px; }
footer .fs { margin: 0; }

.taskbar { height: 40px; background: #1b2a2e; display: flex; color: #fff; font-family: "Noto Sans", sans-serif; }
.start { width: 41px; display: flex; align-items: center; padding-left: 9px; }
.start svg { width: 16px; height: 16px; }
.search { width: 288px; background: #f1f1f1; border: 1px solid #b9bcbd; display: flex; align-items: center; padding-left: 11px; }
.mag { width: 17px; height: 17px; margin: -2px 11px 0 0; }
.search span { font-size: 14px; color: #303030; width: 177px; white-space: nowrap; }
.stars { width: 60px; height: 26px; }
.apps { display: flex; padding-left: 1px; }
.apps div { width: 49px; display: flex; align-items: center; justify-content: center; }
.apps svg { width: 24px; height: 24px; }
.apps .edge { background: #455257; border-bottom: 2px solid #76b9ed; padding-top: 2px; }
.apps .sticky { background: linear-gradient(90deg, #a5642f 91%, #8d4f1f 91%); border-bottom: 2px solid #ff7400; padding-top: 2px; }
.apps .cc { background: linear-gradient(#76b9ed, #76b9ed) center bottom / 40px 2px no-repeat; }
.tray { display: flex; align-items: center; }
.tray > svg { fill: none; stroke: #fff; stroke-width: 1.100; }
.y1 { width: 12px; height: 8px; margin-right: 10px; }
.y2 { width: 16px; height: 12px; margin-right: 8px; }
.y3 { width: 17px; height: 14px; margin-right: 10px; }
.y4 { width: 13px; height: 13px; margin-right: 8px; }
.y5 { width: 23px; height: 14px; margin: -1px 0 0; }
.clock { width: 74px; text-align: center; font-size: 11.200px; line-height: 18px; margin-top: -2px; }
.note { position: relative; width: 44px; height: 40px; padding: 11px 0 0 7px; border-right: 1px solid #6d777a; margin-right: 4px; }
.note svg { width: 16px; height: 16px; fill: none; }
.note span { position: absolute; left: 14px; top: 19px; width: 17px; height: 17px; border: 1px solid #888; border-radius: 50%; background: #2c3438; font-size: 12px; line-height: 15px; text-align: center; }
```
